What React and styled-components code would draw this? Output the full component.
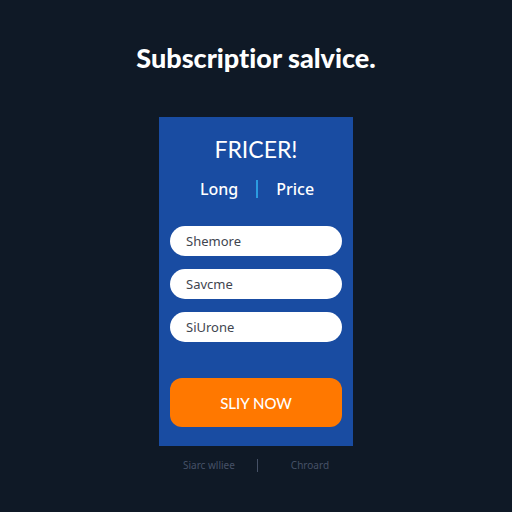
import React from "react";
import styled, { createGlobalStyle } from "styled-components";

const fields = [
  { id: "first", label: "First option", value: "Shemore" },
  { id: "second", label: "Second option", value: "Savcme" },
  { id: "third", label: "Third option", value: "SiUrone" },
];

const App = () => {
  return (
    <>
      <GlobalStyle />
      <Page>
        <Title>Subscriptior salvice.</Title>

        <Card onSubmit={(e) => e.preventDefault()}>
          <CardTitle>FRICER!</CardTitle>
          <Tabs>
            <Tab type="button">Long</Tab>
            <Divider />
            <Tab type="button">Price</Tab>
          </Tabs>

          <Fields>
            {fields.map((field) => (
              <Field
                key={field.id}
                type="text"
                name={field.id}
                aria-label={field.label}
                defaultValue={field.value}
              />
            ))}
          </Fields>

          <BuyButton type="submit">SLIY NOW</BuyButton>
        </Card>

        <Footer>
          <FooterLink href="#start">Siarc wlliee</FooterLink>
          <FooterDivider />
          <FooterLink href="#card">Chroard</FooterLink>
        </Footer>
      </Page>
    </>
  );
};

const GlobalStyle = createGlobalStyle`
  * {
    box-sizing: border-box;
  }
  body {
    margin: 0;
    background-color: #0f1926;
    font-family: "Noto Sans", "Open Sans", sans-serif;
  }
`;

const Page = styled.main`
  display: flex;
  flex-direction: column;
  align-items: center;
  min-height: 100vh;
  padding: 40px 16px 32px;
`;

const Title = styled.h1`
  margin: 0 0 41px;
  color: #ffffff;
  font-family: Lato, sans-serif;
  font-size: 27px;
  font-weight: 900;
  font-variant-ligatures: none;
  line-height: 36px;
  text-align: center;
`;

const Card = styled.form`
  display: flex;
  flex-direction: column;
  width: 38%;
  min-width: 194px;
  padding: 16px 11px 19px;
  background-color: #194ca2;
`;

const CardTitle = styled.h2`
  margin: 0;
  color: #ffffff;
  font-family: Lato, sans-serif;
  font-size: 23px;
  font-weight: 400;
  line-height: 32px;
  text-align: center;
`;

const Tabs = styled.div`
  display: flex;
  justify-content: center;
  align-items: center;
  gap: 18px;
  margin-top: 12px;
  padding-left: 2px;
`;

const Tab = styled.button`
  padding: 0;
  border: 0;
  background: none;
  color: #ffffff;
  font-family: "Noto Sans", sans-serif;
  font-size: 16px;
  font-weight: 500;
  line-height: 24px;
  cursor: pointer;
`;

const Divider = styled.span`
  width: 2px;
  height: 18px;
  background-color: #2b9be0;
`;

const Fields = styled.div`
  display: flex;
  flex-direction: column;
  gap: 13px;
  margin-top: 25px;
`;

const Field = styled.input`
  width: 100%;
  height: 30px;
  padding: 0 16px;
  border: 0;
  border-radius: 15px;
  background-color: #ffffff;
  color: #41454f;
  font-family: "Noto Sans", sans-serif;
  font-size: 13px;
`;

const BuyButton = styled.button`
  height: 49px;
  margin-top: 36px;
  border: 0;
  border-radius: 12px;
  background-color: #ff7800;
  color: #ffffff;
  font-family: Lato, sans-serif;
  font-size: 15px;
  font-weight: 500;
  cursor: pointer;
`;

const Footer = styled.footer`
  display: flex;
  justify-content: center;
  align-items: center;
  margin-top: 12px;
`;

const FooterDivider = styled.span`
  width: 1px;
  height: 13px;
  margin: 0 33px 0 22px;
  background-color: #465166;
`;

const FooterLink = styled.a`
  color: #465166;
  font-size: 10px;
  line-height: 14px;
  text-decoration: none;
`;

export default App;
